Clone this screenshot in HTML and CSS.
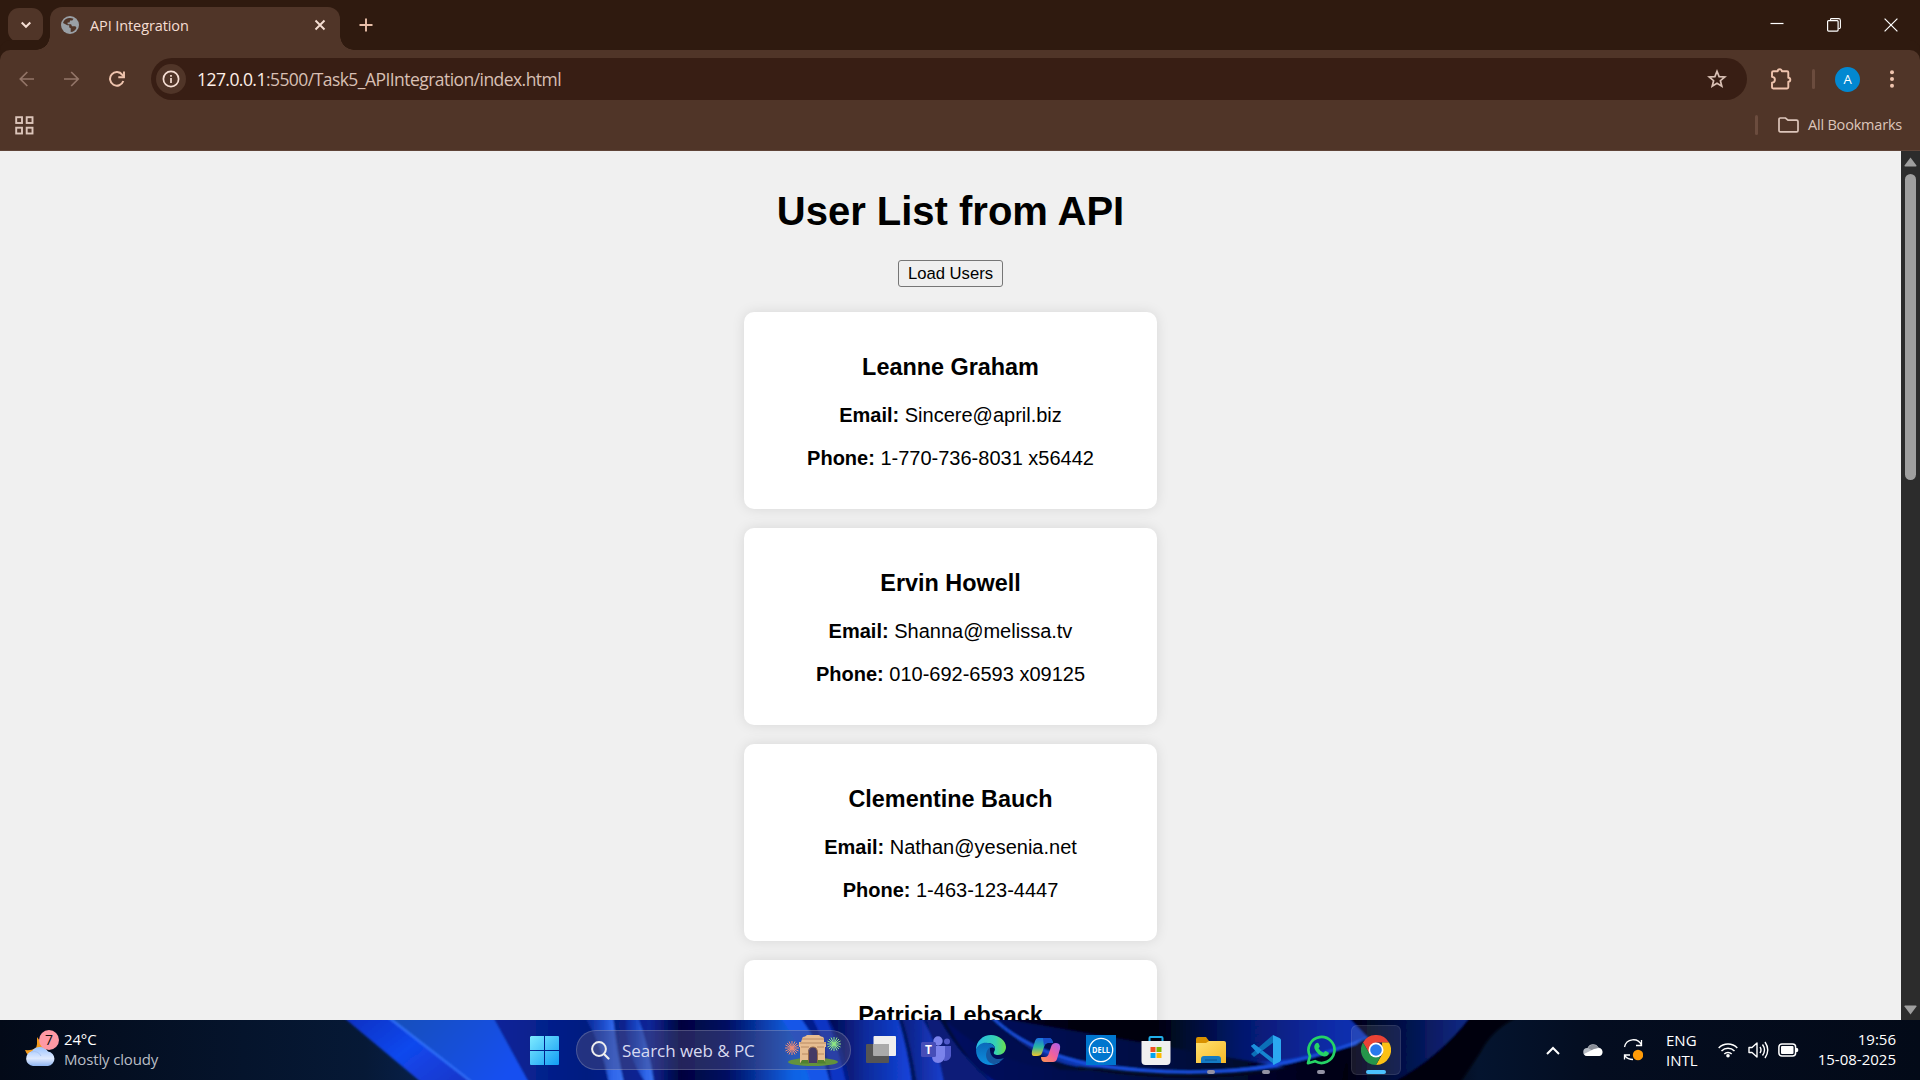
FILE: index.html
```html
<!DOCTYPE html>
<html lang="en">
<head>
<meta charset="utf-8">
<title>API Integration</title>
<link rel="stylesheet" href="styles.css">
</head>
<body>
<div class="screen">
  <header class="tabstrip">
    <div class="tab-search"><svg width="14" height="14" viewBox="0 0 14 14"><path d="M2.700 4.500 7 8.800l4.300-4.300" fill="none" stroke="#f5ded3" stroke-width="2"/></svg></div>
    <div class="tab">
      <svg width="18" height="18" viewBox="0 0 18 18"><circle cx="9" cy="9" r="9" fill="#9aa0a6"/><path d="M8 2.100c-3 .3-5.200 2.300-6 5l4.400 2.100 1.800.1v2.100l1.500.9v3.700c2.800-.2 4.800-1.800 5.800-4.300l-1.100-1.500H11l-.9-1.900H6.600V6.400h1.900l.6-1.800h2.200l1.200-1.800C11.100 2.100 9.500 1.900 8 2.100z" fill="#503528"/><path d="M1 8l5.300 2 1.900 1.500v4.800L6 15.500 2 12z" fill="#9aa0a6"/></svg>
      <span class="tab-title">API Integration</span>
      <svg width="12" height="12" viewBox="0 0 12 12"><path d="m1.500 1.500 9 9m0-9-9 9" stroke="#f5ded3" stroke-width="1.900"/></svg>
    </div>
    <svg class="new-tab" width="14" height="14" viewBox="0 0 14 14"><path d="M7 .5v13M.5 7h13" stroke="#e9bfa9" stroke-width="1.900"/></svg>
    <div class="window-buttons">
      <svg width="14" height="14" viewBox="0 0 14 14"><path d="M.5 5.500h13" stroke="#fff" stroke-width="1.200"/></svg>
      <svg width="14" height="14" viewBox="0 0 14 14"><path d="M3.500 2.500v-1q0-.9.900-.9h7.200q1.800 0 1.800 1.800v7.200q0 .9-.9.900h-1" fill="none" stroke="#fff" stroke-width="1.100"/><rect x=".6" y="2.600" width="10.500" height="10.500" rx="1" fill="none" stroke="#fff" stroke-width="1.200"/></svg>
      <svg width="14" height="14" viewBox="0 0 14 14"><path d="m.6.600 12.800 12.800m0-12.800L.6 13.400" stroke="#fff" stroke-width="1.200"/></svg>
    </div>
  </header>

  <div class="toolbar">
    <nav class="nav-buttons">
      <svg width="16" height="16" viewBox="0 0 16 16"><path d="M15 8H1.500M8.300 1 1.300 8l7 7" fill="none" stroke="#937568" stroke-width="1.700"/></svg>
      <svg width="16" height="16" viewBox="0 0 16 16"><path d="M0 8h14M7.200 1l7 7-7 7" fill="none" stroke="#937568" stroke-width="1.700"/></svg>
      <svg width="16" height="16" viewBox="0 0 16 16"><path d="M14.300 10A6.800 6.800 0 1 1 13.300 3.800L15 5.700" fill="none" stroke="#efc4ae" stroke-width="2"/><path d="M15 .5v5.800H9.300" fill="none" stroke="#efc4ae" stroke-width="1.900"/></svg>
    </nav>
    <div class="omnibox">
      <div class="site-info"><svg width="18" height="18" viewBox="0 0 18 18"><circle cx="9" cy="9" r="7.600" fill="none" stroke="#f5ded3" stroke-width="1.700"/><path d="M9 8v5M9 5v1.800" stroke="#f5ded3" stroke-width="1.700"/></svg></div>
      <span class="url"><b>127.0.0.1</b>:5500/Task5_APIIntegration/index.html</span>
      <svg width="20" height="20" viewBox="0 0 20 20"><path d="m10 2.300 2.100 5.300 5.700.4-4.400 3.700 1.400 5.500-4.800-3-4.800 3 1.400-5.500L2.200 8l5.700-.4z" fill="none" stroke="#d9c0b4" stroke-width="1.700"/></svg>
    </div>
    <svg class="extensions" width="22" height="22" viewBox="0 0 22 22"><path d="M3.500 3.300h4.200a2 2 0 0 1 4.200 0h5.200q1.200 0 1.200 1.200v5.300a1.900 1.900 0 0 1 0 4v5.500q0 1.200-1.200 1.200H3.200Q2 20.500 2 19.300v-4.500q2.900-.3 2.900-3T2 8.800V4.500q0-1.200 1.500-1.200z" fill="none" stroke="#efc4ae" stroke-width="1.900" stroke-linejoin="round"/></svg>
    <i class="divider"></i>
    <span class="avatar">A</span>
    <svg width="4" height="18" viewBox="0 0 4 18"><g fill="#efc4ae"><circle cx="2" cy="2.300" r="2"/><circle cx="2" cy="9" r="2"/><circle cx="2" cy="15.700" r="2"/></g></svg>
  </div>

  <div class="bookmarks">
    <svg width="19" height="19" viewBox="0 0 19 19"><g fill="none" stroke="#dcc5ba" stroke-width="1.900"><rect x="1.200" y="1.200" width="5.800" height="5.800"/><rect x="11.700" y="1.200" width="5.800" height="5.800"/><rect x="1.200" y="11.700" width="5.800" height="5.800"/><rect x="11.700" y="11.700" width="5.800" height="5.800"/></g></svg>
    <i class="divider"></i>
    <svg width="21" height="16" viewBox="0 0 21 16"><path d="M1 2.300Q1 1 2.300 1h5.200l2.500 2.200h8.500Q20 3.200 20 4.500v9q0 1.400-1.400 1.400H2.400Q1 14.900 1 13.500z" fill="none" stroke="#dcc5ba" stroke-width="1.700"/></svg>
    <span class="all-bookmarks">All Bookmarks</span>
  </div>

  <div class="viewport">
    <main class="page">
      <h1>User List from API</h1>
      <button class="load">Load Users</button>
      <section class="users">
        <article class="card"><h3>Leanne Graham</h3><p><strong>Email:</strong> Sincere@april.biz</p><p><strong>Phone:</strong> 1-770-736-8031 x56442</p></article>
        <article class="card"><h3>Ervin Howell</h3><p><strong>Email:</strong> Shanna@melissa.tv</p><p><strong>Phone:</strong> 010-692-6593 x09125</p></article>
        <article class="card"><h3>Clementine Bauch</h3><p><strong>Email:</strong> Nathan@yesenia.net</p><p><strong>Phone:</strong> 1-463-123-4447</p></article>
        <article class="card"><h3>Patricia Lebsack</h3></article>
      </section>
    </main>
    <aside class="scrollbar">
      <svg width="13" height="10" viewBox="0 0 13 10"><path d="M6.500.5 12.500 8.500q.3 1-.8 1H1.300q-1.100 0-.8-1z" fill="#9f9f9f"/></svg>
      <i class="thumb"></i>
      <svg width="13" height="10" viewBox="0 0 13 10"><path d="M6.500 9.500 12.500 1.500q.3-1-.8-1H1.300q-1.100 0-.8 1z" fill="#9f9f9f"/></svg>
    </aside>
  </div>

  <footer class="taskbar">
    <svg class="wallpaper" width="1920" height="60" viewBox="0 0 1920 60">
      <defs>
        <filter id="soft" x="-5%" y="-20%" width="110%" height="140%"><feGaussianBlur stdDeviation="1.200"/></filter>
        <linearGradient id="base"><stop offset="0" stop-color="#030a18"/><stop offset=".19" stop-color="#061936"/><stop offset=".22" stop-color="#08204a"/><stop offset=".74" stop-color="#020410"/><stop offset=".77" stop-color="#04142f"/><stop offset=".83" stop-color="#040d20"/><stop offset="1" stop-color="#030a18"/></linearGradient>
        <linearGradient id="w1" x2="1" y2=".5"><stop offset="0" stop-color="#0d2fc0"/><stop offset=".5" stop-color="#1048ee"/><stop offset="1" stop-color="#1a35c8"/></linearGradient>
        <linearGradient id="w2" x2="1" y2=".4"><stop offset="0" stop-color="#1250b8"/><stop offset="1" stop-color="#1450f0"/></linearGradient>
        <linearGradient id="w3"><stop offset="0" stop-color="#0a259a"/><stop offset=".25" stop-color="#031c80"/><stop offset=".42" stop-color="#0a2596"/><stop offset=".5" stop-color="#02043e"/><stop offset=".62" stop-color="#030c60"/><stop offset=".8" stop-color="#0b62e4"/><stop offset=".92" stop-color="#0d70f4"/><stop offset="1" stop-color="#0a50dc"/></linearGradient>
        <linearGradient id="s1" x1="0" x2="1"><stop offset="0" stop-color="#1746c8" stop-opacity=".3"/><stop offset=".7" stop-color="#2f66ea"/><stop offset="1" stop-color="#3a72f0"/></linearGradient>
        <linearGradient id="w4"><stop offset="0" stop-color="#02084e"/><stop offset=".45" stop-color="#0c2b9c"/><stop offset="1" stop-color="#1444dc"/></linearGradient>
        <linearGradient id="w7"><stop offset="0" stop-color="#0a1f80"/><stop offset="1" stop-color="#1a40d0"/></linearGradient>
        <linearGradient id="w8"><stop offset="0" stop-color="#03082c"/><stop offset=".2" stop-color="#020210"/><stop offset=".4" stop-color="#01020a"/><stop offset=".62" stop-color="#06176c"/><stop offset=".85" stop-color="#0a2ca8"/><stop offset="1" stop-color="#0c36bc"/></linearGradient>
        <linearGradient id="w9" y1="0" y2="1" x2="0"><stop offset="0" stop-color="#0a2ca8" stop-opacity="0"/><stop offset="1" stop-color="#1548d8"/></linearGradient>
        <linearGradient id="w10"><stop offset="0" stop-color="#061060"/><stop offset=".5" stop-color="#030a40"/><stop offset="1" stop-color="#010108"/></linearGradient>
        <linearGradient id="w11" x2="1"><stop offset="0" stop-color="#01020c"/><stop offset=".35" stop-color="#030a38"/><stop offset="1" stop-color="#0b2a88"/></linearGradient>
      </defs>
      <path d="M0 0h1920v60H0z" fill="url(#base)"/>
      <g filter="url(#soft)">
        <path d="M343-3h80l86 66h-87z" fill="url(#w1)"/>
        <path d="M388-3h110l35 66h-58z" fill="url(#w2)"/>
        <path d="m388-3 85 66" stroke="#3374ff" stroke-width="2"/>
        <path d="M493-3h345l30 66H529z" fill="url(#w3)"/>
        <path d="M585-3q18 30 24 66h15q-7-30-11-66z" fill="url(#s1)"/>
        <path d="M626-3q-2 36 20 66h8q-5-36-16-66z" fill="url(#s1)"/>
        <path d="M800-3h250v66H828z" fill="#061a8c"/>
        <path d="M780-3q22 30 30 66h20Q822 27 800-3z" fill="#1657e8"/>
        <path d="M812-3q16 30 20 66h14Q838 27 826-3z" fill="#1034c4"/>
        <path d="M828-3q16 30 22 66h62Q908 30 898-3z" fill="url(#w4)"/>
        <path d="M898-3h48q22 38 46 66h-80Q908 30 898-3z" fill="#06145f"/>
        <path d="M902-3h20q18 32 23 66h-28Q912 30 902-3z" fill="url(#w7)"/>
        <path d="M928-3h150v66h-70Q955 34 928-3z" fill="#030734"/>
        <path d="M940 0q22 38 52 63h-48Q938 30 925-3z" fill="#071a78"/>
        <path d="M946-3q16 40 52 66h90Q1030 40 992-3h-34z" fill="#040d50"/>
        <path d="M992-3h400v30q-60 2-100 19-90 16-200-2Q1030 30 992-3z" fill="url(#w8)"/>
        <path d="M992-3q20 26 76 42 128 12 222 0 54-10 88-29l20-5v20q-60 4-106 20-90 16-192 3-62 0-108-51z" fill="url(#w9)"/>
        <path d="M992-3q34 34 98 47 110 17 200-2 60-14 100-28v52H1004Q970 50 945 0q60 55 145 50 110 17 200-2z" fill="url(#w10)"/>
        <path d="M992-3q34 34 98 47 110 17 200-2 44-10 80-25" fill="none" stroke="#1c55ea" stroke-width="2.400"/>
        <path d="M1348-3h122q-30 40-78 66h-50q4-40 26-45z" fill="url(#w11)"/>
        <path d="M1470-3h48q-26 12-38 36l-20 30h-68q48-26 78-66z" fill="#010208"/>
      </g>
    </svg>

    <div class="weather">
      <div class="weather-icon">
        <svg width="31" height="30" viewBox="0 0 31 30"><defs><linearGradient id="cl" x2="0" y2="1"><stop offset="0" stop-color="#9ac3ff"/><stop offset=".6" stop-color="#dfeaff"/><stop offset="1" stop-color="#8eb4f0"/></linearGradient></defs><path d="M12 0v7q0 7-12 6 2 6 8 7l15-5z" fill="#f39a1b"/><path d="M8 29a7.500 7.500 0 0 1-1-14.800A9.500 9.500 0 0 1 23 14.500 7.300 7.300 0 0 1 23 29z" fill="url(#cl)"/><path d="M6 15q7-2 10 4" fill="none" stroke="#a9c5f4"/></svg>
        <span class="badge">7</span>
      </div>
      <div class="two-lines"><span>24°C</span><span class="dim">Mostly cloudy</span></div>
    </div>

    <svg class="start" width="29" height="29" viewBox="0 0 29 29"><defs><linearGradient id="win" x2="1" y2="1"><stop offset="0" stop-color="#7eebff"/><stop offset="1" stop-color="#119cf5"/></linearGradient></defs><path d="M1 0h13v14H0V1zM15 0h13q1 0 1 1v13H15zM0 15h14v14H1q-1 0-1-1zM15 15h14v13q0 1-1 1H15z" fill="url(#win)"/></svg>

    <div class="search">
      <svg width="19" height="19" viewBox="0 0 19 19"><circle cx="8" cy="8" r="6.900" fill="#ffffff18" stroke="#eee" stroke-width="2"/><path d="m13 13 4.500 4.500" stroke="#eee" stroke-width="2.200" stroke-linecap="round"/></svg>
      <span class="search-text">Search web &amp; PC</span>
      <svg width="56" height="32" viewBox="0 0 56 32">
        <ellipse cx="28" cy="28" rx="25" ry="4" fill="#63923c"/>
        <path d="M17 5q0-2.500 3-2.500l2-1.500h12l2 1.500q3 0 3 2.500v3h2v5h-1v16h-9V19q0-6-4-6t-4 6v10h-8V13h-1V8h2z" fill="#e7bd91"/>
        <path d="M15 9h26M16 13h8m8 0h7M17 5h22M17 20h6m10 0h6" stroke="#b98a62"/>
        <path d="M23.500 29V19q0-6 4.500-6t4.500 6v10" fill="#453a66" stroke="#9a6b48"/>
        <path d="m17 26-2 3.500h9l-1-3.500zm16 0-1 3.500h9L39 26z" fill="#51802f"/>
        <g stroke="#ee8a75"><path d="M7 7v14M0 14h14M2 9l10 10M12 9 2 19M4 7.500l6 13M10 7.500l-6 13M.5 11l13 6M.5 17l13-6"/></g>
        <g stroke="#8ee883"><path d="M49 3v14M42 10h14M44 5l10 10M54 5 44 15M46 3.500l6 13M52 3.500l-6 13M42.500 7l13 6M42.500 13l13-6"/></g>
      </svg>
    </div>

    <nav class="apps">
      <div class="app"><svg width="30" height="30" viewBox="0 0 30 30"><rect y="9" width="23" height="19" rx="1" fill="#555"/><rect x="7.500" y="1" width="22.500" height="20" rx="1" fill="#eee"/><path d="M7.500 9H23v12H7.500z" fill="#aaa"/></svg></div>
      <div class="app"><svg width="30" height="30" viewBox="0 0 30 30"><circle cx="17" cy="6" r="4.700" fill="#7b83eb"/><circle cx="26" cy="6.500" r="3" fill="#5059c9"/><path d="M21 11h9v10q-1 5-7 5z" fill="#5059c9"/><path d="M11 11h13v10q-1 7-7 7t-6-7z" fill="#7b83eb"/><rect x="0" y="7" width="15" height="15" rx="1.500" fill="#464eb8"/><text x="7.500" y="19" font-size="12" font-weight="700" text-anchor="middle" fill="#fff">T</text></svg></div>
      <div class="app"><svg width="30" height="30" viewBox="0 0 30 30"><defs><linearGradient id="ed"><stop offset="0" stop-color="#26b8e8"/><stop offset=".65" stop-color="#35d2b4"/><stop offset="1" stop-color="#6be04c"/></linearGradient><linearGradient id="eb" x2="0" y2="1"><stop offset="0" stop-color="#0a68b9"/><stop offset="1" stop-color="#0d8fdf"/></linearGradient></defs><path d="M0 15C0 6 7 0 15 0s15 6 15 12c0 5-4 8-8 8-3 0-5-1-4-3 3-5-1-9-6-9C6 8 2 11 0 15z" fill="url(#ed)"/><path d="M0 15C2 9 7 7 12 8c4 0 7 3 7 6-3-3-7-1-7 3 0 6 5 10 12 10-3 2-6 3-9 3C7 30 0 24 0 15z" fill="url(#eb)"/><path d="M14 12c-7 6-4 17 5 17 4-1 7-4 9-6-7 3-15 0-14-11z" fill="#1557a0"/></svg></div>
      <div class="app"><svg width="30" height="30" viewBox="0 0 30 30"><defs><linearGradient id="c1" x2="0" y2="1"><stop offset="0" stop-color="#1b70e4"/><stop offset=".5" stop-color="#2ab8a0"/><stop offset="1" stop-color="#f0c52a"/></linearGradient><linearGradient id="c2" x1="1" x2="0" y2="1"><stop offset="0" stop-color="#a95ff0"/><stop offset=".5" stop-color="#f0609c"/><stop offset="1" stop-color="#fb974b"/></linearGradient></defs><path d="M7 3h11q3 0 4 5h-5q-3 0-4 4l-2 6q-1 3-5 3H3q-3 0-2-5L4 6q1-3 3-3z" fill="url(#c1)"/><path d="M12 3h6q3 0 4 5h-5q-3 0-4 4z" fill="#184fca"/><path d="M22 27H14q-4 0-4-5h4q3 0 4-4l2-6q1-4 5-4 5 0 4 6l-3 10q-1 3-4 3z" fill="url(#c2)"/></svg></div>
      <div class="app"><svg width="30" height="30" viewBox="0 0 30 30"><path d="M0 0h30v30H0z" fill="#0076ce"/><circle cx="15" cy="15" r="11.700" fill="none" stroke="#fff" stroke-width="1.300"/><text x="15" y="18" font-size="8" font-weight="700" text-anchor="middle" fill="#fff" textLength="18" lengthAdjust="spacingAndGlyphs">DELL</text></svg></div>
      <div class="app"><svg width="30" height="30" viewBox="0 0 30 30"><path d="M8.500 7V3q0-1 1-1h11q1 0 1 1v4" fill="none" stroke="#20aee9" stroke-width="2"/><path d="M.5 6h29v20q0 4-4 4h-21q-4 0-4-4z" fill="#f0f0f0"/><path d="M9.500 12h5v5h-5z" fill="#f25022"/><path d="M15.500 12h5v5h-5z" fill="#7fba00"/><path d="M9.500 18h5v5h-5z" fill="#00a4ef"/><path d="M15.500 18h5v5h-5z" fill="#ffb900"/></svg></div>
      <div class="app open"><svg width="30" height="30" viewBox="0 0 30 30"><defs><linearGradient id="fo" x2="1" y2="1"><stop offset="0" stop-color="#ffe070"/><stop offset="1" stop-color="#f7ba27"/></linearGradient></defs><path d="M0 4q0-2 2-2h8l3 4h15v8H0z" fill="#d99100"/><path d="M0 8h10l3-2h15q2 0 2 2v20H0z" fill="url(#fo)"/><path d="M5 28v-4q0-3 3-3h14q3 0 3 3v4z" fill="#147bc4"/><path d="M9 25h12" stroke="#0d5790"/></svg></div>
      <div class="app open"><svg width="30" height="30" viewBox="0 0 30 30"><path d="m0 11 3-2L24 25v5z" fill="#1686d0"/><path d="M22 0 0 19l3 3L23 7z" fill="#0b70b8"/><path d="m0 11 3-2 8 6-4 4z" fill="#1c8fdb"/><path d="m22 0 6.500 3q1.500.8 1.500 2v20q0 1.200-1.500 2L22 30V0z" fill="#2ba8f0"/></svg></div>
      <div class="app open"><svg width="30" height="30" viewBox="0 0 30 30"><path d="M2 28.200 4 21A13 13 0 1 1 9 26.200z" fill="none" stroke="#25d366" stroke-width="2.700" stroke-linejoin="round"/><path d="M10.500 8q1-.8 2 .3l1.200 2.700q.3.700-1.200 2.300 1.500 3 5 4.500 1.500-2 2.200-1.700l2.800 1.400q.8.500 0 2-1.500 2.500-4.500 2-7-1.500-9.500-8Q7.500 10 10.500 8z" fill="#25d366"/></svg></div>
      <div class="app active"><svg width="30" height="30" viewBox="0 0 30 30"><path d="M2 7.500A15 15 0 0 1 28 7.500H15L8.500 18.700z" fill="#ea4335"/><path d="M28 7.500A15 15 0 0 1 15 30l6.500-11.300L21 7.500z" fill="#fbc116"/><path d="M15 30A15 15 0 0 1 2 7.500l6.500 11.200L15 22.500l4.300-.7z" fill="#25954a"/><circle cx="15" cy="15" r="7.500" fill="#fff"/><circle cx="15" cy="15" r="5.800" fill="#2979ec"/></svg></div>
    </nav>

    <div class="tray">
      <svg width="14" height="9" viewBox="0 0 14 9"><path d="m1 8 6-6 6 6" fill="none" stroke="#fff" stroke-width="2"/></svg>
      <svg class="cloud" width="20" height="14" viewBox="0 0 20 14"><path d="M4 13a4 4 0 0 1 .5-8 6 6 0 0 1 11-.5A4.400 4.400 0 0 1 16 13z" fill="#b7bcc4"/><path d="M5 5a6 6 0 0 1 10.500-.5L10 8z" fill="#898d96"/><path d="m1 11 10-5 5-1q4 1 3.500 5-.8 3-3.500 3H4q-2 0-3-2z" fill="#fff"/></svg>
      <svg class="sync" width="20" height="22" viewBox="0 0 20 22"><path d="M1.500 8A9 9 0 0 1 18.500 6M18.500 1v5.500H13M1.500 20.500V16H7M2 17q3 3.500 8 3.500" fill="none" stroke="#fff" stroke-width="1.300"/><circle cx="15" cy="16" r="5.200" fill="#ff9b08"/></svg>
      <div class="lang two-lines"><span>ENG</span><span>INTL</span></div>
      <svg class="wifi" width="20" height="16" viewBox="0 0 20 16"><path d="M.7 6a13 13 0 0 1 18.600 0M3.500 9a9.200 9.200 0 0 1 13 0M6.300 12a5.200 5.200 0 0 1 7.400 0" fill="none" stroke="#fff" stroke-width="1.500"/><circle cx="10" cy="13.700" r="1.800" fill="#fff"/></svg>
      <svg class="speaker" width="21" height="18" viewBox="0 0 21 18"><path d="M1 6.500h3L9 2v14l-5-4.500H1zM12 6q2 3 0 6M14.500 3.500q4 5.500 0 11M17 1q5.500 8 0 16" fill="none" stroke="#fff" stroke-width="1.400" stroke-linejoin="round"/></svg>
      <svg class="battery" width="21" height="14" viewBox="0 0 21 14"><rect x=".9" y=".9" width="16.700" height="12.200" rx="3" fill="none" stroke="#fff" stroke-width="1.500"/><rect x="3" y="3" width="12.500" height="8" rx="1" fill="#fff"/><path d="M18 5h1q1.300 0 1.300 2T19 9h-1z" fill="#fff"/></svg>
      <div class="clock two-lines"><span>19:56</span><span>15-08-2025</span></div>
    </div>
  </footer>
</div>
</body>
</html>
```
FILE: styles.css
```css
* { box-sizing: border-box; }
body { margin: 0; overflow: hidden; background: #503528; }
svg { display: block; flex: none; }

.screen {
  width: 1920px;
  height: 1080px;
  display: flex;
  flex-direction: column;
  font-family: "Open Sans", "Noto Sans", sans-serif;
}

/* Browser chrome */
.tabstrip {
  height: 50px;
  flex: none;
  display: flex;
  align-items: center;
  padding: 0 22px 0 8px;
  background: #2f1a0f;
}
.tab-search {
  width: 35px;
  height: 34px;
  display: grid;
  place-items: center;
  border-radius: 11px;
  background: #503528;
}
.tab {
  position: relative;
  align-self: flex-end;
  width: 290px;
  height: 43px;
  margin-left: 7px;
  padding: 0 14px 7px 11px;
  display: flex;
  align-items: center;
  border-radius: 12px 12px 0 0;
  background: #503528;
}
.tab::before, .tab::after {
  content: "";
  position: absolute;
  bottom: 0;
  width: 14px;
  height: 14px;
}
.tab::before { left: -14px; background: radial-gradient(circle at 0 0, transparent 13.5px, #503528 14px); }
.tab::after { right: -14px; background: radial-gradient(circle at 100% 0, transparent 13.5px, #503528 14px); }
.tab-title {
  flex: 1;
  margin-left: 11px;
  font-size: 14.5px;
  letter-spacing: -0.1px;
  color: #f5ded3;
}
.new-tab { margin-left: 19px; }
.window-buttons { display: flex; gap: 43px; margin: -1px 0 0 auto; }

.toolbar {
  height: 58px;
  flex: none;
  display: flex;
  align-items: center;
  padding-right: 26px;
  border-radius: 10px 10px 0 0;
  background: #503528;
  box-shadow: 0 -10px 0 #2f1a0f;
}
.nav-buttons { flex: none; display: flex; gap: 29px; width: 151px; padding-left: 19px; }
.omnibox {
  width: 1596px;
  height: 42px;
  flex: none;
  display: flex;
  align-items: center;
  padding: 0 20px 0 5px;
  border-radius: 21px;
  background: #381e14;
}
.site-info {
  width: 30px;
  height: 30px;
  display: grid;
  place-items: center;
  border-radius: 50%;
  background: #503528;
}
.url { flex: 1; margin-left: 11px; font-size: 17.5px; letter-spacing: -0.55px; color: #d9c0b4; white-space: nowrap; }
.url b { font-weight: 400; color: #fff0e8; }
.extensions { margin-left: 23px; }
.divider { width: 3px; height: 20px; border-radius: 2px; background: #6b4c3e; }
.toolbar .divider { margin-left: 20px; }
.avatar {
  width: 25px;
  height: 25px;
  margin: 0 auto 0 20px;
  border-radius: 50%;
  background: #0288d1;
  color: #fff;
  font-size: 13px;
  line-height: 25px;
  text-align: center;
}
.bookmarks {
  height: 43px;
  flex: none;
  display: flex;
  align-items: center;
  padding: 0 18px 8px 15px;
  border-bottom: 1px solid #5f4438;
}
.bookmarks .divider { margin: 0 20px 0 auto; }
.all-bookmarks { width: 94px; margin: -2px 0 0 9px; font-size: 14.5px; letter-spacing: -0.2px; color: #dcc5ba; white-space: nowrap; }

/* Page */
.viewport { flex: 1; min-height: 0; display: flex; }
.page {
  flex: 1;
  padding-top: 37px;
  overflow: hidden;
  background: #f0f0f0;
  font-family: Arial, "Liberation Sans", sans-serif;
  font-size: 20px;
  text-align: center;
  color: #000;
}
.page h1 { margin: 0 0 26px; font-size: 40px; line-height: 46px; }
.load {
  display: block;
  width: 105px;
  height: 27px;
  margin: 0 auto 25px;
  padding: 0;
  border: 1px solid #767676;
  border-radius: 3px;
  background: #efefef;
  color: #000;
  font: 16.667px/24px Arial, "Liberation Sans", sans-serif;
}
.card {
  width: 412.5px;
  height: 197.2px;
  margin: 0 auto 18.8px;
  padding: 18.75px;
  overflow: hidden;
  border-radius: 10px;
  background: #fff;
  box-shadow: 0 0 12.5px rgba(0, 0, 0, .1);
}
.card h3 { margin: 23.4px 0 22.4px; font-size: 23.4px; line-height: 27px; }
.card p { margin: 20px 0; line-height: 23px; }
.scrollbar {
  width: 19px;
  display: flex;
  flex-direction: column;
  align-items: center;
  padding: 6px 0 5px;
  background: #2c2c2c;
}
.thumb { width: 11px; height: 306px; margin: 7px 0 auto; border-radius: 6px; background: #9f9f9f; }

/* Taskbar */
.taskbar {
  position: relative;
  height: 60px;
  flex: none;
  display: flex;
  align-items: center;
  padding-right: 24px;
  overflow: hidden;
  color: #fff;
}
.taskbar > * { position: relative; }
.taskbar > .wallpaper { position: absolute; left: 0; top: 0; }
.two-lines { display: flex; flex-direction: column; margin-top: -2px; font-size: 15px; line-height: 20px; white-space: nowrap; }
.weather { width: 530px; display: flex; align-items: center; gap: 8px; padding-left: 25px; }
.weather .two-lines { letter-spacing: -0.15px; }
.weather-icon { position: relative; padding-top: 3px; }
.badge {
  position: absolute;
  left: 14px;
  top: -4px;
  width: 20px;
  height: 20px;
  border-radius: 50%;
  background: #ff99a4;
  color: #111;
  font-size: 14px;
  line-height: 20px;
  text-align: center;
}
.dim { color: #b9bec6; }
.search {
  width: 275px;
  height: 40px;
  margin-left: 17px;
  display: flex;
  align-items: center;
  padding: 0 9px 0 14px;
  border: 1px solid #ffffff30;
  border-radius: 20px;
  background: #50508070;
}
.search-text { flex: 1; margin-left: 12px; font-size: 17px; letter-spacing: -0.05px; color: #d8daf0; }
.apps { display: flex; margin-left: 2px; }
.app { position: relative; width: 55px; height: 60px; display: grid; place-items: center; }
.app svg { position: relative; }
.app.open::after, .app.active::after {
  content: "";
  position: absolute;
  bottom: 6px;
  left: 24px;
  width: 8px;
  height: 4px;
  border-radius: 2px;
  background: #9392a4;
}
.app.active::after { left: 18px; width: 20px; background: #4cc2ff; }
.app.active::before {
  content: "";
  position: absolute;
  inset: 5px 2px 5px 3px;
  border: 1px solid #ffffff18;
  border-radius: 6px;
  background: #ffffff18;
}
.tray { display: flex; align-items: center; margin-left: auto; }
.cloud { margin-left: 23px; }
.sync { margin-left: 20px; }
.tray .lang { width: 30px; margin: 0 0 0 23px; }
.wifi { margin-left: 22px; }
.speaker { margin-left: 10px; }
.battery { margin-left: 9px; }
.clock { width: 78px; margin-left: 19px; align-items: flex-end; }
```
